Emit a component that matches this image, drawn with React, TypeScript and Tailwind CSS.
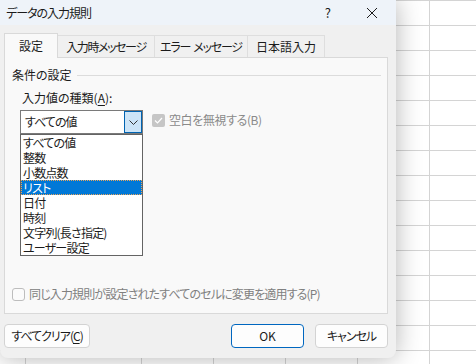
import React from 'react';

// list of data validation types shown in the open dropdown
const ruleTypes = [
  'すべての値',
  '整数',
  '小数点数',
  'リスト',
  '日付',
  '時刻',
  '文字列(長さ指定)',
  'ユーザー設定',
];

const colWidths = ['w-[26px]', 'w-[116px]', 'w-[72px]', 'w-[72px]', 'w-[72px]', 'w-[72px]'];

function SheetGrid() {
  return (
    <div className="border-t border-[#d4d4d4]">
      {Array.from({ length: 15 }).map((_, r) => (
        <div key={r} className="flex h-[25px] border-b border-[#d4d4d4]">
          {colWidths.map((w, c) => (
            <div key={c} className={`${w} shrink-0 border-r border-[#d4d4d4]`} />
          ))}
          <div className="flex-1" />
        </div>
      ))}
    </div>
  );
}

function Tab({ label, active, width, tight }: { label: string; active?: boolean; width: string; tight?: string }) {
  if (active) {
    return (
      <div
        className={`${width} relative z-10 h-[25px] shrink-0 border border-b-0 border-[#d9d9d9] bg-[#f9f9f9] flex items-center justify-center pb-[1px]`}
      >
        {label}
      </div>
    );
  }
  return (
    <div
      className={`${width} ${tight ?? ''} mb-px h-[22px] shrink-0 border border-b-0 border-l-0 border-[#dedede] bg-[#f0f0f0] flex items-center justify-center whitespace-pre`}
    >
      {label}
    </div>
  );
}

export default function App() {
  return (
    <div
      className="relative w-[476px] h-[364px] overflow-hidden bg-white text-[12px] text-[#1b1b1b] [font-feature-settings:'palt']"
      style={{ fontFamily: '"Noto Sans CJK JP", "Noto Sans", sans-serif' }}
    >
      <SheetGrid />

      {/* Dialog window */}
      <div className="absolute left-0 top-0 w-[396px] h-[358px] rounded-b-[8px] bg-[#f0f0f0] shadow-[0_0_26px_rgba(0,0,0,0.3)] flex flex-col overflow-hidden">
        {/* Title bar */}
        <div className="h-[25px] shrink-0 bg-[#eef3f9] flex items-center pl-[6px] leading-[14px]">
          <span className="tracking-[-1px]">データの入力規則</span>
          <span className="ml-auto text-[13px] mr-[35px]">?</span>
          <svg width="12" height="12" viewBox="0 0 12 12" className="mr-[18px]">
            <path d="M1 1L11 11M11 1L1 11" stroke="#1b1b1b" strokeWidth="1" />
          </svg>
        </div>

        {/* Tabs */}
        <div className="mt-[8px] pl-[4px] flex items-end h-[25px] leading-[14px]">
          <Tab label="設定" active width="w-[54px]" />
          <Tab label="入力時メッセージ" width="w-[97px]" tight="tracking-[-1.4px]" />
          <Tab label="エラー  メッセージ" width="w-[93px]" tight="tracking-[-1.2px]" />
          <Tab label="日本語入力" width="w-[77px]" />
        </div>

        {/* Panel */}
        <div className="-mt-px ml-[4px] w-[384px] h-[257px] border border-[#d9d9d9] bg-[#f9f9f9] flex flex-col leading-[14px]">
          <div className="mt-[10px] pl-[7px] flex items-center">
            <span>条件の設定</span>
            <div className="ml-[5px] mr-[6px] flex-1 h-px bg-[#dcdcdc]" />
          </div>

          <div className="mt-[9px] pl-[17px]">
            入力値の種類(<span className="underline underline-offset-2">A</span>):
          </div>

          <div className="mt-[5px] pl-[15px] flex items-start">
            <div className="relative w-[123px] h-[24px] border border-[#7a7a7a] bg-white flex items-center">
              <span className="pl-[4px] tracking-[-1px]">すべての値</span>
              <div className="ml-auto w-[18px] h-[22px] border border-[#0063b1] bg-[#cce4f7] flex items-center justify-center">
                <svg width="9" height="5" viewBox="0 0 9 5">
                  <path d="M0.5 0.5L4.5 4.5L8.5 0.5" stroke="#333" strokeWidth="1" fill="none" />
                </svg>
              </div>

              {/* Open dropdown list */}
              <div className="absolute left-[-1px] top-[23px] z-20 w-[123px] h-[122px] border border-[#646464] bg-white flex flex-col tracking-[-0.8px]">
                {ruleTypes.map((t) =>
                  t === 'リスト' ? (
                    <div
                      key={t}
                      className="h-[15px] leading-[13px] pl-[1px] bg-[#0078d7] text-white border border-dotted border-[#e9a55a]"
                    >
                      {t}
                    </div>
                  ) : (
                    <div key={t} className="h-[15px] leading-[15px] pl-[2px]">
                      {t}
                    </div>
                  )
                )}
              </div>
            </div>

            <div className="ml-[9px] mt-[3px] flex items-center">
              <div className="w-[13px] h-[13px] rounded-[2px] bg-[#c6c6c6] flex items-center justify-center">
                <svg width="9" height="7" viewBox="0 0 9 7">
                  <path d="M1 3.5L3.5 6L8 1" stroke="#fff" strokeWidth="1.2" fill="none" />
                </svg>
              </div>
              <span className="ml-[4px] text-[#8a8a8a] tracking-[-0.4px]">空白を無視する(B)</span>
            </div>
          </div>

          <div className="mt-auto mb-[12px] pl-[7px] flex items-center">
            <div className="w-[13px] h-[13px] rounded-[3px] border border-[#bdbdbd] bg-[#fbfbfb]" />
            <span className="ml-[4px] text-[#808080] tracking-[-0.85px]">
              同じ入力規則が設定されたすべてのセルに変更を適用する(P)
            </span>
          </div>
        </div>

        {/* Buttons */}
        <div className="mt-[10px] flex items-center leading-[14px]">
          <button className="ml-[4px] w-[86px] h-[24px] rounded-[4px] border border-[#d3d3d3] bg-[#fdfdfd] tracking-[-1px]">
            すべてクリア(<span className="underline underline-offset-2">C</span>)
          </button>
          <button className="ml-auto w-[73px] h-[24px] rounded-[4px] border border-[#0067c0] bg-[#fdfdfd]">
            OK
          </button>
          <button className="ml-[11px] mr-[8px] w-[73px] h-[24px] rounded-[4px] border border-[#d3d3d3] bg-[#fdfdfd] tracking-[-1px]">
            キャンセル
          </button>
        </div>
      </div>
    </div>
  );
}
